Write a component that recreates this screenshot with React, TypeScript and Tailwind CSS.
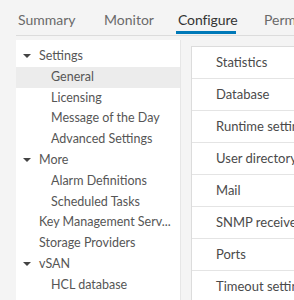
import React from "react";

const Caret = () => (
  <svg width="8" height="6" viewBox="0 0 8 6" className="shrink-0">
    <path d="M0 1 L8 1 L4 5 Z" fill="#444" />
  </svg>
);

type Item = { label: string; level: number; caret?: boolean; selected?: boolean };

const items: Item[] = [
  { label: "Settings", level: 0, caret: true },
  { label: "General", level: 1, selected: true },
  { label: "Licensing", level: 1 },
  { label: "Message of the Day", level: 1 },
  { label: "Advanced Settings", level: 1 },
  { label: "More", level: 0, caret: true },
  { label: "Alarm Definitions", level: 1 },
  { label: "Scheduled Tasks", level: 1 },
  { label: "Key Management Serv...", level: 0 },
  { label: "Storage Providers", level: 0 },
  { label: "vSAN", level: 0, caret: true },
  { label: "HCL database", level: 1 },
];

const rows = [
  "Statistics",
  "Database",
  "Runtime settings",
  "User directory",
  "Mail",
  "SNMP receivers",
  "Ports",
  "Timeout settings",
];

export default function App() {
  return (
    <div
      className="w-[294px] h-[300px] overflow-hidden bg-[#f4f4f4] text-[#565656]"
      style={{ fontFamily: 'Lato, "Open Sans", sans-serif' }}
    >
      <div className="ml-[16px] flex h-[36px] border-b border-[#dcdcdc] text-[14px] whitespace-nowrap overflow-hidden">
        <div className="shrink-0 pl-[2px] pt-[9px] w-[86px] text-[#6a6a6a]">Summary</div>
        <div className="shrink-0 pl-[2px] pt-[9px] w-[74px] text-[#6a6a6a]">Monitor</div>
        <div className="shrink-0 relative pt-[9px] w-[86px] text-[#333]">
          <span className="pl-[2px] tracking-[-0.1px]">Configure</span>
          <div className="absolute left-0 top-[31px] w-[60px] h-[3px] bg-[#0079b8]" />
        </div>
        <div className="shrink-0 pl-[2px] pt-[9px] text-[#6a6a6a]">Permissions</div>
      </div>
      <div className="flex mt-[4px]">
        <div className="shrink-0 ml-[16px] w-[164px] h-[260px] bg-white pt-[6px] text-[12.5px] whitespace-nowrap">
          {items.map((it) => (
            <div
              key={it.label}
              className={`flex items-center h-[20.8px] ${it.selected ? "bg-[#ececec]" : ""} ${
                it.level === 0 ? (it.caret ? "pl-[7px]" : "pl-[23px]") : "pl-[35px]"
              }`}
            >
              {it.caret && <Caret />}
              <span className={it.caret ? "ml-[8px]" : ""}>{it.label}</span>
            </div>
          ))}
        </div>
        <div className="shrink-0 w-[11px] border-l border-[#e6e6e6]" />
        <div className="mt-[6px] flex-1 bg-white border-l border-t border-[#dcdcdc] text-[13px] whitespace-nowrap overflow-hidden">
          {rows.map((r) => (
            <div key={r} className="h-[32px] flex items-center pl-[24px] border-b border-[#e4e4e4] text-[#4a4a4a]">
              {r}
            </div>
          ))}
        </div>
      </div>
    </div>
  );
}
